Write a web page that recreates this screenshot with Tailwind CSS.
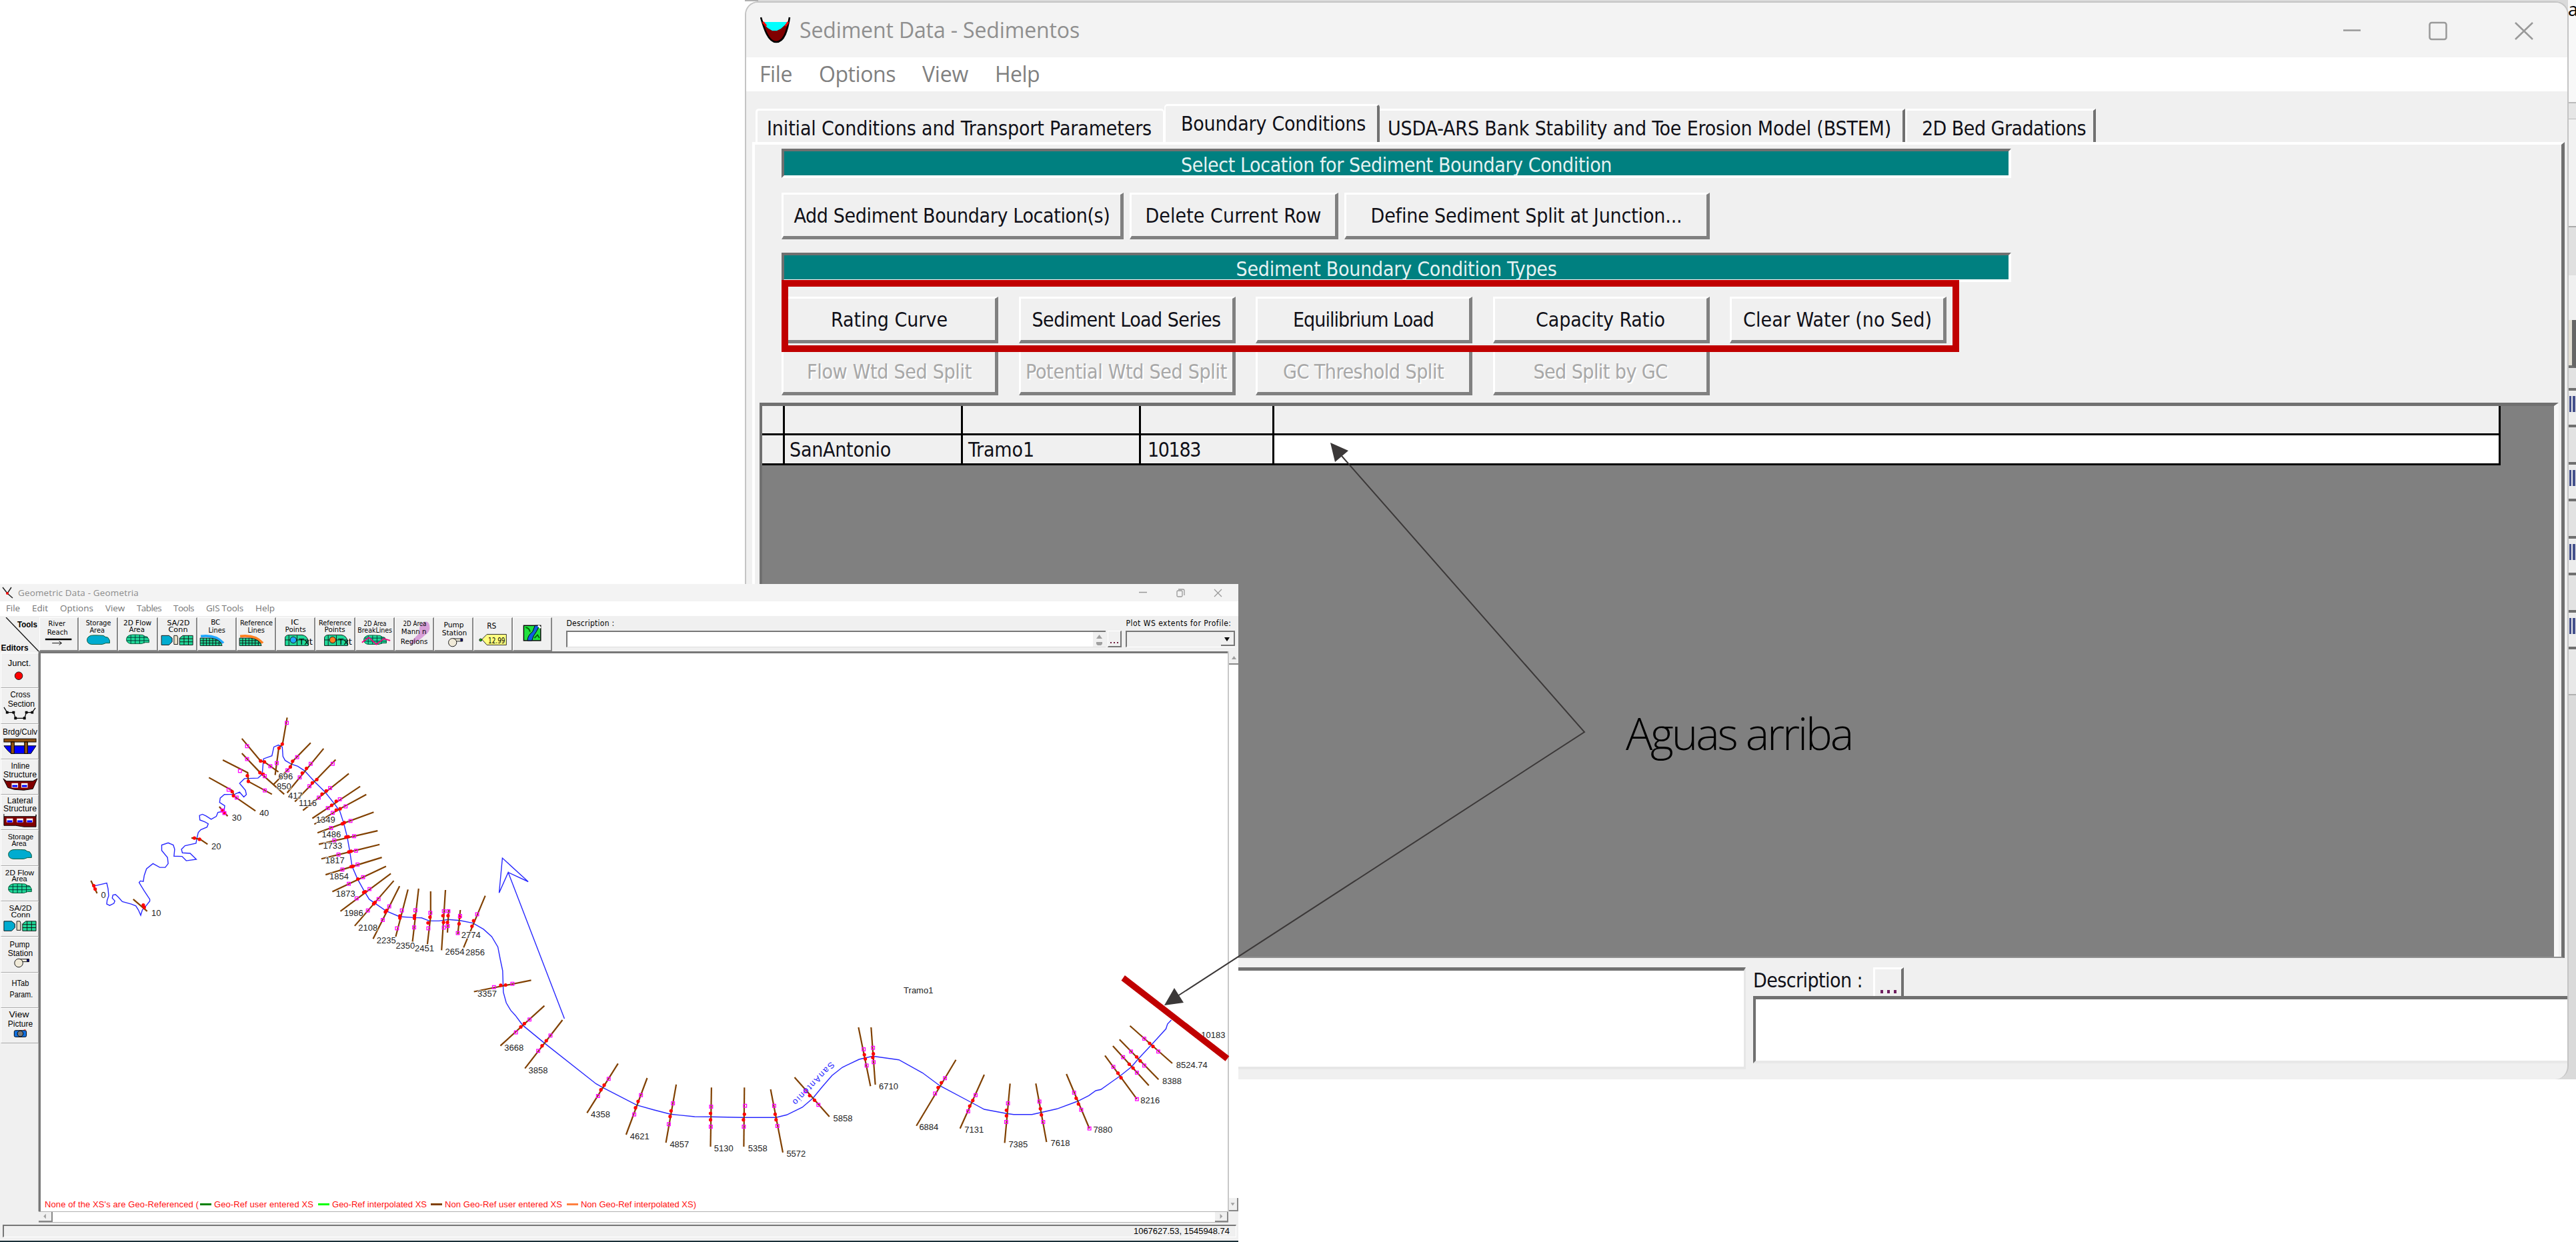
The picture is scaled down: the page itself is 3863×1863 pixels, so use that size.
<!DOCTYPE html>
<html lang="es">
<head>
<meta charset="utf-8">
<title>Sediment Data - Sedimentos</title>
<script src="https://cdn.jsdelivr.net/npm/@tailwindcss/browser@4"></script>
</head>
<body class="bg-white">
<div id="root" class="relative w-[3863px] h-[1863px] overflow-hidden bg-white font-['DejaVu_Sans_Condensed','DejaVu_Sans',sans-serif] whitespace-nowrap">

<!-- window behind, only its edges show -->
<div class="absolute left-[1117px] top-0 w-[2746px] h-[1619px] bg-[#dadada] flex justify-between overflow-hidden">
  <div class="w-[20px] h-[20px] bg-white border-t-2 border-[#b0b0b0]"></div>
  <div class="w-[12px] flex flex-col text-[27px] leading-none text-black">
    <div class="h-[155px] bg-[#f8f8f8] border-b-2 border-[#bbb] font-['Open_Sans',sans-serif]">as</div>
    <div class="h-[24px] bg-[#e6e6e6] border-b border-[#bbb]"></div>
    <div class="h-[162px] bg-[#f2f2f2] border-b-2 border-[#aaa]"></div>
    <div class="h-[72px] bg-[#e0e0e0]"></div>
    <div class="h-[67px] bg-[#f0f0f0]"></div>
    <div class="h-[72px] bg-[#e4e0d4] border-b-4 border-b-[#707070] border-r-[6px] border-r-[#666]"></div>
    <div class="h-[34px] bg-[#e2e2e2] border-b-4 border-[#707070]"></div>
    <div class="h-[55px] bg-[#ececec] border-b-4 border-[#707070] pt-[8px] pl-[2px] flex gap-[2px]"><i class="w-[3px] h-[24px] bg-[#44508c]"></i><i class="w-[4px] h-[24px] bg-[#44508c]"></i></div>
    <div class="h-[56px] bg-[#e2e2e2] border-b-4 border-[#707070]"></div>
    <div class="h-[55px] bg-[#ececec] border-b-4 border-[#707070] pt-[8px] pl-[2px] flex gap-[2px]"><i class="w-[3px] h-[24px] bg-[#44508c]"></i><i class="w-[4px] h-[24px] bg-[#44508c]"></i></div>
    <div class="h-[56px] bg-[#e2e2e2] border-b-4 border-[#707070]"></div>
    <div class="h-[55px] bg-[#ececec] border-b-4 border-[#707070] pt-[8px] pl-[2px] flex gap-[2px]"><i class="w-[3px] h-[24px] bg-[#44508c]"></i><i class="w-[4px] h-[24px] bg-[#44508c]"></i></div>
    <div class="h-[56px] bg-[#e2e2e2] border-b-4 border-[#707070]"></div>
    <div class="h-[55px] bg-[#ececec] border-b-4 border-[#707070] pt-[8px] pl-[2px] flex gap-[2px]"><i class="w-[3px] h-[24px] bg-[#44508c]"></i><i class="w-[4px] h-[24px] bg-[#44508c]"></i></div>
    <div class="h-[69px] bg-[#e8e8e8] border-b-2 border-[#b0b0b0]"></div>
  </div>
</div>

<!-- Sediment Data window -->
<section class="absolute left-[1117px] top-[2px] w-[2735px] h-[1617px] bg-[#f0f0f0] border-x-2 border-t-2 border-[#c4c4c4] rounded-t-[20px] rounded-br-[20px] flex flex-col overflow-hidden text-[30px] text-[#101018]">
  <header class="h-[82px] shrink-0 bg-[#f3f3f3] flex items-center pl-[21px] pr-[51px] font-['Open_Sans',sans-serif] text-[32px] text-[#8f8f8f]">
    <svg class="w-[46px] h-[40px] mr-[13px]" viewBox="0 0 46 40"><path d="M6 8H41C38 18 34 38 24 38S10 20 6 8Z" fill="#00ffff"/><path d="M4 8Q10 17 13 18L18 21L25 21L31 18L42 8C39 24 34 38 24 38S8 24 4 8Z" fill="#800000"/><path d="M1 1C6 18 12 38 24 38S41 20 44 1" fill="none" stroke="#000" stroke-width="2.6"/><path d="M4 8l5 6M42 8l-4 6" stroke="#f00" stroke-width="3"/></svg>
    <span data-w="420">Sediment Data - Sedimentos</span>
    <div class="ml-auto flex items-center gap-[101px] mt-[3px]">
      <svg class="w-[28px] h-[32px]" viewBox="0 0 28 32"><path d="M1 14.500H27" stroke="#999" stroke-width="2.500"/></svg>
      <svg class="w-[28px] h-[32px]" viewBox="0 0 28 32"><rect x="1.500" y="3" width="25" height="25" rx="3" fill="none" stroke="#999" stroke-width="2.500"/></svg>
      <svg class="w-[28px] h-[32px]" viewBox="0 0 28 32"><path d="M1 3L27 28M27 3L1 28" stroke="#999" stroke-width="2.500"/></svg>
    </div>
  </header>
  <nav class="h-[51px] shrink-0 bg-white flex items-center gap-[40px] pl-[20px] pb-px font-['Open_Sans',sans-serif] text-[32px] text-[#808080]">
    <span data-w="49">File</span><span data-w="115">Options</span><span data-w="69">View</span><span data-w="67">Help</span>
  </nav>
  <div class="h-[76px] shrink-0 flex items-end pl-[14px]">
    <div class="h-[50px] w-[613px] border-t-3 border-l-3 border-r-2 border-white rounded-t-[5px] flex items-center pl-[14px] pt-[5px]"><span data-w="577">Initial Conditions and Transport Parameters</span></div>
    <div class="h-[57px] w-[323px] border-t-3 border-l-2 border-t-white border-l-white border-r-4 border-r-[#707070] rounded-t-[5px] flex items-center pl-[23px] pb-[1px]"><span data-w="277">Boundary Conditions</span></div>
    <div class="h-[50px] w-[788px] border-t-3 border-t-white border-r-4 border-r-[#707070] flex items-center pl-[12px] pt-[5px]"><span data-w="755">USDA-ARS Bank Stability and Toe Erosion Model (BSTEM)</span></div>
    <div class="h-[50px] w-[286px] border-t-3 border-l-3 border-t-white border-l-white border-r-4 border-r-[#707070] flex items-center pl-[22px] pt-[5px]"><span data-w="246">2D Bed Gradations</span></div>
  </div>
  <main class="ml-[9px] w-[2718px] h-[1224px] shrink-0 border-t-4 border-l-4 border-white border-r-[5px] border-r-[#707070] border-b-2 border-b-[#909090] flex flex-col items-start">
    <div class="ml-[40px] mt-[6px] w-[1844px] h-[44px] bg-[#008080] border-t-4 border-l-4 border-[#707070] border-b-4 border-b-white border-r-4 border-r-white flex items-center justify-center pt-[4px] text-[#e6f2f2]"><span data-w="646">Select Location for Sediment Boundary Condition</span></div>
    <div class="ml-[40px] mt-[22px] flex gap-[9px]">
      <button class="w-[513px] h-[70px] border-t-3 border-l-3 border-white border-b-5 border-r-5 border-b-[#808080] border-r-[#808080] flex items-center justify-center"><span data-w="474">Add Sediment Boundary Location(s)</span></button>
      <button class="w-[313px] h-[70px] border-t-3 border-l-3 border-white border-b-5 border-r-5 border-b-[#808080] border-r-[#808080] flex items-center justify-center"><span data-w="264">Delete Current Row</span></button>
      <button class="w-[548px] h-[70px] border-t-3 border-l-3 border-white border-b-5 border-r-5 border-b-[#808080] border-r-[#808080] flex items-center justify-center"><span data-w="467">Define Sediment Split at Junction...</span></button>
    </div>
    <div class="ml-[40px] mt-[20px] w-[1844px] h-[44px] bg-[#008080] border-t-4 border-l-4 border-[#707070] border-b-4 border-b-white border-r-4 border-r-white flex items-center justify-center pt-[4px] text-[#e6f2f2]"><span data-w="481">Sediment Boundary Condition Types</span></div>
    <div class="ml-[40px] mt-[22px] grid grid-cols-[repeat(5,325px)] gap-x-[30.500px] gap-y-[8px]">
      <button class="h-[70px] border-t-3 border-l-3 border-white border-b-5 border-r-5 border-b-[#808080] border-r-[#808080] flex items-center justify-center"><span data-w="175">Rating Curve</span></button>
      <button class="h-[70px] border-t-3 border-l-3 border-white border-b-5 border-r-5 border-b-[#808080] border-r-[#808080] flex items-center justify-center"><span data-w="283">Sediment Load Series</span></button>
      <button class="h-[70px] border-t-3 border-l-3 border-white border-b-5 border-r-5 border-b-[#808080] border-r-[#808080] flex items-center justify-center"><span data-w="211">Equilibrium Load</span></button>
      <button class="h-[70px] border-t-3 border-l-3 border-white border-b-5 border-r-5 border-b-[#808080] border-r-[#808080] flex items-center justify-center"><span data-w="194">Capacity Ratio</span></button>
      <button class="h-[70px] border-t-3 border-l-3 border-white border-b-5 border-r-5 border-b-[#808080] border-r-[#808080] flex items-center justify-center"><span data-w="283">Clear Water (no Sed)</span></button>
      <button class="h-[70px] border-t-3 border-l-3 border-white border-b-5 border-r-5 border-b-[#808080] border-r-[#808080] flex items-center justify-center text-[#a8a8a8] text-shadow-[2px_2px_0_#fff]"><span data-w="247">Flow Wtd Sed Split</span></button>
      <button class="h-[70px] border-t-3 border-l-3 border-white border-b-5 border-r-5 border-b-[#808080] border-r-[#808080] flex items-center justify-center text-[#a8a8a8] text-shadow-[2px_2px_0_#fff]"><span data-w="302">Potential Wtd Sed Split</span></button>
      <button class="h-[70px] border-t-3 border-l-3 border-white border-b-5 border-r-5 border-b-[#808080] border-r-[#808080] flex items-center justify-center text-[#a8a8a8] text-shadow-[2px_2px_0_#fff]"><span data-w="241">GC Threshold Split</span></button>
      <button class="h-[70px] border-t-3 border-l-3 border-white border-b-5 border-r-5 border-b-[#808080] border-r-[#808080] flex items-center justify-center text-[#a8a8a8] text-shadow-[2px_2px_0_#fff]"><span data-w="201">Sed Split by GC</span></button>
    </div>
    <div class="ml-[7px] mt-[11px] w-[2698px] h-[831px] bg-[#808080] border-t-5 border-l-4 border-[#707070] border-r-[7px] border-r-[#f8f8f8] shrink-0">
      <div class="grid grid-cols-[34px_267px_267px_200px_1839px] w-[2607px] grid-rows-[44px_45px] leading-[42px] text-[#101018]">
        <div class="bg-[#f0f0f0] border-r-3 border-b-3 border-black"></div><div class="bg-[#f0f0f0] border-r-3 border-b-3 border-black"></div><div class="bg-[#f0f0f0] border-r-3 border-b-3 border-black"></div><div class="bg-[#f0f0f0] border-r-3 border-b-3 border-black"></div><div class="bg-[#f0f0f0] border-r-3 border-b-3 border-black"></div>
        <div class="bg-[#f0f0f0] border-r-3 border-b-3 border-black"></div><div class="bg-[#f0f0f0] border-r-3 border-b-3 border-black pl-[7px] pt-px"><span data-w="152">SanAntonio</span></div><div class="bg-[#f0f0f0] border-r-3 border-b-3 border-black pl-[8px] pt-px"><span data-w="99">Tramo1</span></div><div class="bg-[#f0f0f0] border-r-3 border-b-3 border-black pl-[10px] pt-px"><span data-w="79">10183</span></div><div class="bg-white border-r-3 border-b-3 border-black"></div>
      </div>
    </div>
  </main>
  <footer class="flex pt-[14px] items-start">
    <div class="w-[1499px] h-[153px] shrink-0 bg-white border-t-5 border-t-[#707070] border-b-4 border-r-3 border-[#e6e6e6]"></div>
    <div class="ml-[11px] flex flex-col shrink-0">
      <div class="flex h-[43px] items-center gap-[16px]"><span data-w="164" class="pb-[4px]">Description :</span>
        <div class="w-[46px] h-[43px] border-t-3 border-l-3 border-white border-r-4 border-r-[#707070] flex items-end justify-center gap-[6px] pb-[4px]"><i class="w-[4px] h-[5px] bg-[#702060]"></i><i class="w-[4px] h-[5px] bg-[#702060]"></i><i class="w-[4px] h-[5px] bg-[#702060]"></i></div>
      </div>
      <div class="w-[1224px] h-[101px] bg-white border-t-5 border-t-[#707070] border-l-4 border-l-[#707070] border-b-4 border-b-[#e8e8e8]"></div>
    </div>
  </footer>
</section>

<!-- Geometric Data window -->
<section class="absolute left-0 top-[876px] w-[1857px] h-[987px] bg-[#f0f0f0] border-b-2 border-[#1a3038] flex flex-col overflow-hidden text-[12px]">
  <header class="h-[26px] shrink-0 bg-[#f3f3f3] flex items-center pl-[3px] pr-[24px] font-['Open_Sans',sans-serif] text-[13.500px] text-[#8c8c8c]">
    <svg class="w-[18px] h-[18px] mr-[6px]" viewBox="0 0 18 18"><path d="M1 1L8 10L16 17M14 1L8 10" fill="none" stroke="#222" stroke-width="1.500"/><circle cx="8" cy="10" r="2" fill="#e00"/></svg>
    <span data-w="181">Geometric Data - Geometria</span>
    <svg class="ml-auto w-[126px] h-[16px]" viewBox="0 0 126 16" fill="none" stroke="#999" stroke-width="1.300"><path d="M1 7.500H13M114 3L125 14M125 3L114 14"/><rect x="58" y="5" width="8" height="9" rx="1.500"/><path d="M60 3H67Q69 3 69 5V12"/></svg>
  </header>
  <nav class="h-[22px] shrink-0 bg-white flex items-center gap-[18px] pl-[9px] pb-px font-['Open_Sans',sans-serif] text-[13.500px] text-[#757575]">
    <span data-w="21">File</span><span data-w="24">Edit</span><span data-w="50">Options</span><span data-w="29">View</span><span data-w="37">Tables</span><span data-w="31">Tools</span><span data-w="56">GIS Tools</span><span data-w="29">Help</span>
  </nav>
  <div class="h-[53px] shrink-0 flex items-start pt-[2px]">
    <svg class="w-[59px] h-[52px] shrink-0" viewBox="0 0 59 52" font-weight="bold" font-size="12.5" font-family="Liberation Sans"><path d="M9 0L58 51" stroke="#111" stroke-width="1.300"/><text x="26" y="15" textLength="30" lengthAdjust="spacingAndGlyphs">Tools</text><text x="1.500" y="49.500" textLength="41" lengthAdjust="spacingAndGlyphs">Editors</text></svg>
    <div id="tools" class="flex"></div>
    <div class="flex flex-col ml-[21px] w-[812px] shrink-0">
      <div class="h-[20px] leading-[18px]"><span data-w="72">Description :</span></div>
      <div class="w-[809px] h-[25px] bg-white border-t-2 border-l-2 border-[#777] border-b border-b-[#ddd] flex justify-end"><svg class="w-[19px] h-[22px] bg-[#f0f0f0]" viewBox="0 0 19 22"><path d="M5 10L9.500 4L14 10ZM5 15H14V18L12 20H7L5 18Z" fill="#a0a0a0"/></svg></div>
    </div>
    <div class="mt-[20px] w-[21px] h-[25px] border-t border-l border-white border-r-2 border-b-2 border-r-[#777] border-b-[#777] flex items-end justify-center gap-[3px] pb-[4px]"><i class="size-[2px] bg-[#702040]"></i><i class="size-[2px] bg-[#702040]"></i><i class="size-[2px] bg-[#702040]"></i></div>
    <div class="flex flex-col ml-[6px]">
      <div class="h-[20px] leading-[18px]"><span data-w="158">Plot WS extents for Profile:</span></div>
      <div class="w-[164px] h-[25px] border-t-2 border-l-2 border-[#777] border-b border-b-white flex justify-end"><svg class="w-[21px] h-[21px] border-r-2 border-b-2 border-[#777]" viewBox="0 0 19 19"><path d="M5 8H13L9 14Z"/></svg></div>
    </div>
  </div>
  <div class="flex h-[840px] shrink-0">
    <div id="editors" class="w-[58px] pl-px pt-[2px] flex flex-col shrink-0 border-r border-[#bbb]"></div>
    <div class="w-[1783px] h-[840px] bg-white border-t-3 border-l-3 border-[#777] flex flex-col justify-end">
      <div class="flex items-center text-[#ff1010] font-['Liberation_Sans',sans-serif] text-[13px] pl-[6px] pb-px gap-[4px]">
        <span data-w="231">None of the XS's are Geo-Referenced (</span><i class="w-[17px] h-[3px] -ml-[2px] bg-[#008000]"></i><span data-w="149">Geo-Ref user entered XS</span><i class="ml-[3px] w-[17px] h-[3px] bg-[#00ff00]"></i><span data-w="142">Geo-Ref interpolated XS</span><i class="ml-[2px] w-[17px] h-[3px] bg-[#804000]"></i><span data-w="176">Non Geo-Ref user entered XS</span><i class="ml-[3px] w-[17px] h-[3px] bg-[#ff8040]"></i><span data-w="173">Non Geo-Ref interpolated XS)</span>
      </div>
    </div>
    <div class="w-[16px] flex flex-col justify-between border-l-2 border-[#c8c8c8] bg-white">
      <svg class="w-full h-[20px] bg-[#f0f0f0] border-b-2 border-[#888]" viewBox="0 0 14 18"><path d="M4 12L7.500 7L11 12Z" fill="#a0a0a0"/></svg>
      <svg class="w-full h-[20px] bg-[#f0f0f0] border-b-2 border-r-2 border-[#888]" viewBox="0 0 14 18"><path d="M3 7H10L6.500 12Z" fill="#a0a0a0"/></svg>
    </div>
  </div>
  <div class="ml-[58px] w-[1784px] h-[17px] shrink-0 bg-white border-t border-b border-[#b0b0b0] flex justify-between">
    <svg class="w-[21px] h-full bg-[#f0f0f0] border-r-2 border-b-2 border-[#888]" viewBox="0 0 19 14"><path d="M11 3V11L7 7Z" fill="#a0a0a0"/></svg>
    <svg class="w-[20px] h-full bg-[#f0f0f0] border-r-2 border-b-2 border-[#888]" viewBox="0 0 19 14"><path d="M8 3V11L12 7Z" fill="#a0a0a0"/></svg>
  </div>
  <div class="mt-[3px] ml-[4px] w-[1850px] h-[19px] shrink-0 border-t-2 border-l-2 border-[#777] border-r border-b border-r-white border-b-white flex items-center justify-end pr-[9px] text-[13px] font-['Liberation_Sans',sans-serif]"><span data-w="144">1067627.53, 1545948.74</span></div>
</section>

<!-- river schematic and annotations -->
<svg id="map" class="absolute left-0 top-0 w-[3863px] h-[1863px]" viewBox="0 0 3863 1863" font-family="Liberation Sans" font-size="13"></svg>
<div class="absolute left-[1172px] top-[420px] w-[1766px] h-[108px] border-[10px] border-[#c00000]"></div>
<div class="absolute left-[2438px] top-[1054px] leading-[90px] text-[67px] font-light font-['Open_Sans','Noto_Sans',sans-serif] text-black"><span data-w="339">Aguas arriba</span></div>
</div>

<script>
const T = (s, x, y, w, z = 12) => `<text x="${x}" y="${y}" textLength="${w}" lengthAdjust="spacingAndGlyphs" font-size="${z}">${s}</text>`;
const blob = (x, y, c) => `<path transform="translate(${x} ${y})" d="M6 1Q10 0 26 1Q29 4 33 4Q37 8 36 13Q30 12 24 15H7Q0 14 0 8Q0 3 6 1Z" fill="${c}" stroke="#053" stroke-width="1"/>`;
const gridBlob = (x, y) => blob(x, y, '#20d898') + `<path transform="translate(${x} ${y})" d="M1 5H34M0 10H36M7 1V15M14 1V15M21 1V15M28 2V14" stroke="#033" stroke-width="1"/>`;
const conn = y => `<g transform="translate(0 ${y})" stroke="#111"><path d="M4 1H16L21 5V11L16 16H4Z" fill="#00acd0"/><path d="M24 1H29L30 4V15H24Z" fill="#e8e0c8"/><path d="M33 5L38 1H54V16H33Z" fill="#20d898"/><path d="M33 6H54M33 11H54M40 1V16M47 1V16" fill="none"/></g>`;
const lines = c => `<path d="M4 29Q28 26 40 40" fill="none" stroke="${c}" stroke-width="4"/><path d="M3 32H20Q36 34 38 44H3Z" fill="#20d898" stroke="#111"/><path d="M3 36H32M3 40H37M8 32V44M13 32V44M18 32V44M23 32V44M28 34V44M33 37V44" stroke="#111"/>`;
const points = c => `<path d="M13 44V31Q14 27 20 27H40Q48 28 50 37V44Z" fill="#20d898" stroke="#111"/><path d="M13 35H50M19 28V44M32 28V44" stroke="#111"/><circle cx="26" cy="35" r="5" fill="${c}" stroke="#111"/>${T('Txt', 35, 42, 22, 13)}`;
const pump = (x, y) => `<g transform="translate(${x} ${y})" stroke="#111"><path d="M8 1H22V5H10" fill="#f4f0e0"/><rect x="20" y="1" width="3" height="4" fill="#009"/><circle cx="7" cy="7" r="6.500" fill="#f0ead8"/></g>`;
const tools = [
  T('River',13,13,27)+T('Reach',11,27,33)+'<path d="M8 34H50" stroke="#000" stroke-width="2.500"/><path d="M19 40H34M30 37L34 40L30 43" fill="none" stroke="#000"/>',
  T('Storage',10,12,40)+T('Area',16,23,24)+blob(12,27,'#00acd0'),
  T('2D Flow',7,12,45)+T('Area',16,22,25)+gridBlob(12,26),
  T('SA/2D',13,12,36)+T('Conn',15,22,31)+conn(27),
  T('BC',20,11,15)+T('Lines',16,23,27)+lines('#20a8ff'),
  T('Reference',4,12,52)+T('Lines',16,23,27)+lines('#ff8020'),
  T('IC',22,11,13)+T('Points',13,22,33)+points('#20a8ff'),
  T('Reference',4,12,52)+T('Points',13,22,33)+points('#ff8020'),
  T('2D Area',12,13,36,11)+T('BreakLines',2,23,55)+gridBlob(12,27)+'<path d="M9 39L20 31L32 42L44 33L54 36" fill="none" stroke="#f0087c" stroke-width="2"/>',
  '<path d="M42 8Q52 2 54 12Q56 22 46 28Q40 34 30 40Q24 44 22 40Q30 32 38 24Q36 14 42 8Z" fill="#d8a0d8"/>'+T('2D Area',12,13,37,11)+T('Mann n',9,26,40)+T('Regions',8,41,43),
  T('Pump',14,15,32)+T('Station',11,28,40)+pump(21,32),
  T('RS',20,17,15,13)+'<path d="M12 34L20 26H51V43H20Z" fill="#ffff80" stroke="#222"/><circle cx="10" cy="35" r="2" fill="#0c0" stroke="#111"/>'+T('12.99',22,40,27,13),
  '<rect x="16" y="12" width="27" height="24" fill="#20e040" stroke="#000" stroke-width="1.500"/><path d="M34 12L30 22Q22 28 22 36H29Q31 28 36 22L41 12Z" fill="#1060e0" stroke="#000"/><path d="M19 15Q25 16 26 22M33 32L38 27L41 32" fill="none" stroke="#060" stroke-width="2"/><path d="M39 12L43 16" stroke="#fff" stroke-width="3"/>'
];
const editors = [
  T('Junct.',10,20,36,13)+'<circle cx="27" cy="35" r="6" fill="#f00" stroke="#111"/>',
  T('Cross',14,14,31,13)+T('Section',10,28,42,13)+'<path d="M4 29L9 37H19L22 46H36L39 37H48L53 30" fill="none" stroke="#000" stroke-width="1.300"/><path d="M7 35h4v4h-4zM17 35h4v4h-4zM20 44h4v4h-4zM34 44h4v4h-4zM37 35h4v4h-4zM46 35h4v4h-4z"/>',
  T('Brdg/Culv',2,16,54,13)+'<path d="M4 33Q12 44 16 45H46L54 33Z" fill="#00f" stroke="#000"/><rect x="4" y="22" width="50" height="5" fill="#905010" stroke="#000"/><rect x="15" y="27" width="5" height="18" fill="#905010" stroke="#000"/><rect x="36" y="27" width="5" height="18" fill="#905010" stroke="#000"/>',
  T('Inline',15,13,29,13)+T('Structure',3,27,52,13)+'<path d="M3 29L8 33H49L56 29L49 45L35 47L20 46L10 43Z" fill="#800000" stroke="#000"/><path d="M16 36h10v7h-10zM31 36h10v7h-10z" fill="#fff"/><path d="M17 39h8v3h-8zM32 39h8v3h-8z" fill="#00f"/>',
  T('Lateral',9,12,40,13)+T('Structure',3,25,52,13)+'<path d="M4 29V47L22 47L35 49H54V30V33H4" fill="#800000" stroke="#000"/><path d="M8 36h10v6h-10zM24 36h10v6h-10zM39 36h10v6h-10z" fill="#fff"/><path d="M9 39h8v3h-8zM25 39h8v3h-8zM40 39h8v3h-8z" fill="#00f"/>',
  T('Storage',10,14,40)+T('Area',16,24,23)+blob(11,29,'#00acd0'),
  T('2D Flow',6,13,45)+T('Area',16,23,24)+gridBlob(11,26),
  T('SA/2D',12,13,35)+T('Conn',15,24,30)+conn(29),
  T('Pump',13,16,31,13)+T('Station',10,29,39,13)+pump(20,33),
  T('HTab',16,20,27,13)+T('Param.',13,37,36,13),
  T('View',12,14,31,13)+T('Picture',10,28,39,13)+'<rect x="20" y="34" width="19" height="10" rx="2" fill="#1070e0" stroke="#000"/><circle cx="29.500" cy="39" r="4.500" fill="#777" stroke="#000"/><path d="M35 33h3" stroke="#f00"/>'
];
document.getElementById('tools').innerHTML = tools.map(g => `<svg class="w-[59.200px] h-[51px] border-l border-t border-white border-r-2 border-b-2 border-r-[#888] border-b-[#888]" viewBox="0 0 59 51" font-family="DejaVu Sans Condensed, DejaVu Sans">${g}</svg>`).join('');
document.getElementById('editors').innerHTML = editors.map(g => `<svg class="w-[57px] h-[53.300px] border-t border-l border-white border-r border-b border-r-[#aaa] border-b-[#aaa] shrink-0" viewBox="0 0 57 53.3" font-family="Liberation Sans">${g}</svg>`).join('');

// three digitised sheets: origin and units per pixel
const sheets = { A: [100, 1040, 2.0632, 2.8], B: [700, 1380, 2.0632, 3], C: [1300, 1420, 2.6133, 3] };
const px = (s, x, y) => { const [ox, oy, sx, sy] = sheets[s]; return [+(ox + x / sx).toFixed(1), +(oy + y / sy).toFixed(1)]; };
const pts = (s, a) => { const r = []; for (let i = 0; i < a.length; i += 2) r.push(px(s, a[i], a[i + 1])); return r; };
const river = [
 ...pts('A',[88,808,124,797,128,820,130,850,125,870,124,885,133,891,146,882,149,872,141,860,143,847,151,845,160,856,172,875,200,885,214,893,222,910,229,932,234,910,247,890,257,873,257,865,240,830,224,795,228,788,237,790,240,765,247,737,267,715,288,731,305,731,314,715,312,690,294,660,294,637,314,628,330,637,334,655,332,684,357,685,370,703,401,697,382,672,358,670,355,655,366,640,400,630,403,608,407,585,415,573,434,562,438,548,428,540,412,532,411,513,420,508,431,515,447,529,463,517,468,500,487,495,489,472,473,458,475,440,488,425,520,424,535,415,548,435,556,425,553,407,535,378,550,358,592,356,605,340,609,275,635,262,641,225,655,217,667,225,669,265,676,282,695,297,715,306,736,325,768,372,800,415,829,465,845,495,857,545,868,603,876,665,883,727,900,780,922,834,936,865,953,881,988,914,1030,938,1075,942,1098,943,1122,956,1152,956,1180,950,1217,954,1257,965,1290,991,1315,1022,1334,1065,1342,1120,1349,1165,1351,1255,1360,1300,1374,1332,1388,1352,1411,1394,1478,1469]),
 ...pts('B',[400,737,422,755,526,833,580,855,630,874,705,885,755,886,858,889,957,889,990,877,1038,843,1071,802,1100,750,1130,700,1162,663,1214,627,1256,613,1337,629,1410,688,1464,746]),
 ...pts('C',[411,702,460,732,547,751,575,755,647,755,682,746,745,730,825,696,870,670,897,648,917,643,965,604,992,582,1037,541,1062,507,1115,442,1172,370,1178,348,1193,330])];
// sheet, cut line, bank stations, levee points, [label, x, y]
const xs = [
['A',[75,787,94,840],[84,808,88,822],[],['0',106,860]],
['A',[206,865,249,915],[237,889,240,899],[],['10',262,934]],
['A',[386,607,412,612,436,634],[395,608,411,613],[],['20',448,654]],
['A',[472,476,498,516],[482,492,488,502],[482,492,488,503],['30',511,535]],
['A',[440,354,512,408,518,432,584,494],[512,413,516,430],[501,405,526,438],['40',596,515]],
['A',[483,280,560,333,562,370,635,424],[559,346,562,370],[536,326,613,408]],
['A',[542,252,600,335,673,424],[598,333,608,340],[558,276,613,348]],
['A',[542,190,600,284,612,288,655,330],[600,284,612,288],[558,222,630,306]],
['A',[682,102,668,212,656,230,645,343],[667,213,657,230],[681,124,650,293],['696',655,362]],
['A',[755,208,700,284,692,310,640,383],[699,285,692,309],[713,268,683,323],['850',650,402]],
['A',[795,232,682,418],[742,315,729,335],[755,296,721,353],['417',685,443]],
['A',[832,279,706,455],[774,362,760,376],[823,296,751,390],['1116',718,474]],
['A',[873,337,731,492],[803,410,790,423],[815,398,780,438]],
['A',[908,391,760,525],[834,453,820,470],[845,445,808,482],['1349',771,544]],
['A',[927,425,843,487,766,550],[846,485,834,490],[863,475,823,502]],
['A',[950,499,776,586],[859,543,853,548],[878,536,818,566],['1486',789,606]],
['A',[962,577,780,634],[871,602,864,604],[889,600,828,618],['1733',793,652]],
['A',[968,635,788,695],[880,663,873,666],[895,661,841,677],['1817',800,714]],
['A',[975,689,801,762],[886,726,880,728],[900,719,853,740],['1854',813,782]],
['A',[988,727,822,833],[901,780],[917,772,873,800],['1873',833,853]],
['A',[1003,757,847,915],[924,833,919,836],[937,822,897,861],['1986',858,935]],
['A',[1012,787,891,977],[954,878,950,884],[965,864,932,912],['2108',902,996]],
['A',[1030,810,948,1031],[990,912,986,918],[998,895,978,952],['2235',959,1050]],
['A',[1056,824,1018,1022],[1031,935,1031,944],[1037,912,1022,987],['2350',1018,1073]],
['A',[1089,820,1070,1043],[1076,934,1076,945],[1079,911,1075,983],['2451',1077,1083]],
['A',[1126,832,1126,936,1116,1054],[1124,940,1118,964],[1125,922,1119,987]],
['A',[1172,826,1160,1079],[1164,934,1166,962],[1167,915,1167,984],['2654',1171,1098]],
['A',[1182,910,1178,1005],[1180,934,1178,962],[1181,915,1179,977]],
['A',[1218,910,1210,1012],[1216,940,1214,968],[1217,935,1210,1007],['2774',1221,1028]],
['A',[1295,850,1228,1068],[1259,955,1254,978],[1270,928],['2856',1234,1099]],
['A',[1437,1205,1260,1253],[1343,1226,1358,1225],[1322,1234,1379,1220],['3357',1271,1273]],
['A',[1478,1312,1342,1480],[1416,1387,1405,1401],[1432,1370,1390,1424],['3668',1354,1500]],
['B',[296,450,180,668],[246,543,233,566],[259,520,221,589],['3858',191,689]],
['B',[468,646,372,868],[425,743,415,764],[439,715,406,792],['4358',384,888]],
['B',[558,711,493,966],[530,816,522,845],[539,788,518,875],['4621',505,986]],
['B',[648,740,616,1002],[632,859,629,884],[638,825,625,919],['4857',628,1022]],
['B',[757,754,754,1020],[754,870,754,899],[756,840,755,930],['5130',765,1040]],
['B',[859,754,857,1020],[859,874,856,899],[861,836,857,930],['5358',870,1040]],
['B',[940,762,978,1046],[954,874,957,899],[951,836,961,927],['5572',989,1066]],
['B',[1014,708,1122,885],[1061,790,1076,811],[1048,771,1088,832],['5858',1134,905]],
['B',[1212,483,1249,748],[1230,606,1233,625],[1228,582,1237,655]],
['B',[1251,483,1264,741],[1258,602,1256,619],[1257,575,1259,640],['6710',1275,761]],
['C',[349,509,194,806],[292,612,279,634],[306,592,267,661],['6884',205,825]],
['C',[460,576,365,818],[415,692,403,717],[426,668,397,741],['7131',382,836]],
['C',[561,616,540,883],[547,736,547,761],[553,705,546,789],['7385',555,902]],
['C',[662,616,704,879],[680,729,684,757],[676,697,691,789],['7618',720,898]],
['C',[782,573,872,818],[820,682,829,708],[812,657,840,734,872,818],['7880',887,836]],
['C',[933,490,1058,686],[984,569,996,590],[966,541,1058,686],['8216',1072,706]],
['C',[964,447,1105,625],[1028,529,1043,546],[1004,497,1058,567]],
['C',[990,418,1143,598],[1057,496,1071,514],[1035,472,1087,535],['8388',1158,618]],
['C',[1031,356,1197,525],[1108,435,1121,449],[1087,414,1142,472],['8524.74',1212,546]],
['C',[],[],[],['10183',1310,412]],
['C',[],[],[],['Tramo1',144,209]]
];
const poly = (p, a) => `<polyline points="${p.join(' ')}" fill="none" ${a}/>`;
let m = poly(river, 'stroke="#2828ff" stroke-width="1.4"');
m += poly(pts('A',[1540,1366,1366,752,1338,838,1348,692,1428,791,1366,752]), 'stroke="#2828ff" stroke-width="1.4"');
let labels = '';
for (const [s, l, d, q, t] of xs) {
  if (l.length) m += poly(pts(s, l), 'stroke="#804000" stroke-width="2.2"');
  for (const [x, y] of pts(s, d)) m += `<circle cx="${x}" cy="${y}" r="2.6" fill="#ff0000"/>`;
  for (const [x, y] of pts(s, q)) m += `<rect x="${x - 2.3}" y="${y - 2.3}" width="4.6" height="4.6" fill="none" stroke="#ff00ff" stroke-width="1.3"/>`;
  if (t) { const [x, y] = px(s, t[1], t[2]); labels += `<text x="${x}" y="${y}" fill="#222" stroke="#fff" stroke-width="1.5" paint-order="stroke">${t[0]}</text>`; }
}
m += labels;
m += `<text transform="translate(1246 1592) rotate(134)" textLength="84" font-size="13" fill="#2828ff">SanAntonio</text>`;
m += `<polygon points="${pts('C',[1011,129,1420,493,1405,515,997,152]).join(' ')}" fill="#c00000"/>`;
m += `<path d="M2012 684L2376 1098L1766 1494" fill="none" stroke="#3b3838" stroke-width="2"/><path d="M1995 664L2022 676L2002 693ZM1746 1508L1761 1482L1775 1504Z" fill="#3b3838"/>`;
document.getElementById('map').innerHTML = m;

// spread each label to its nominal width, again whenever the page's styles change its size
function fit() {
  for (const el of document.querySelectorAll('[data-w]')) {
    el.style.display = 'inline-block';
    el.style.letterSpacing = '0px';
    const n = el.textContent.length, w = +el.dataset.w;
    el.style.letterSpacing = ((w - el.getBoundingClientRect().width) / n).toFixed(3) + 'px';
  }
}
fit();
new ResizeObserver(fit).observe(document.getElementById('root'));
addEventListener('load', fit);
document.fonts.ready.then(fit);
</script>
</body>
</html>
